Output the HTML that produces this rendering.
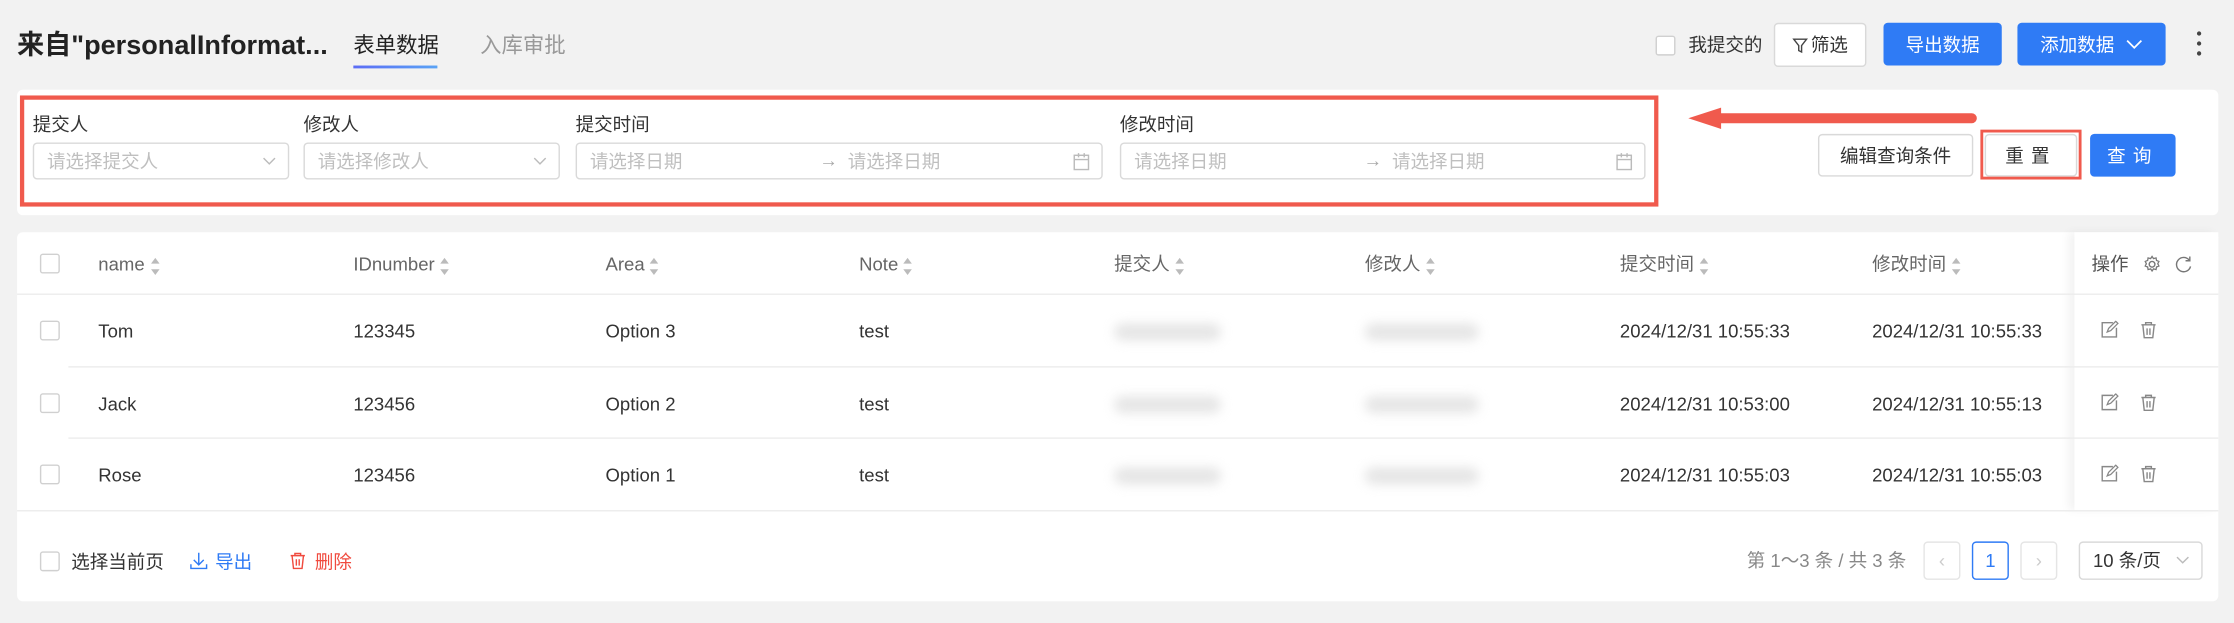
<!DOCTYPE html>
<html><head><meta charset="utf-8">
<style>
html,body{margin:0;padding:0;width:2234px;height:622px;overflow:hidden;background:#f2f2f2}
#s{position:absolute;left:0;top:0;width:1568px;height:437px;transform:scale(1.42474);transform-origin:0 0;font-family:"Liberation Sans","Noto Sans CJK SC",sans-serif;color:#333;font-size:13px;line-height:15px}
.a{position:absolute;white-space:nowrap}
.btn{position:absolute;box-sizing:border-box;border-radius:3px;display:flex;align-items:center;justify-content:center;font-size:13px}
.wb{background:#fff;border:1px solid #d9d9d9;color:#333}
.bb{background:#2f7bf5;color:#fff}
.inp{position:absolute;box-sizing:border-box;border:1px solid #d9d9d9;border-radius:3px;height:26px;top:100px;background:#fff;color:#bfbfbf;font-size:13px}
.lab{position:absolute;top:80px;font-size:13px;color:#333}
.cb{position:absolute;width:14px;height:14px;box-sizing:border-box;border:1px solid #d0d0d0;border-radius:2px;background:#fff}
.th{position:absolute;top:178px;color:#666;font-size:13px}
.sort{display:inline-block;vertical-align:middle;margin-left:4px;width:7px;height:12px;position:relative}
.sort:before{content:"";position:absolute;top:0;left:0;border:3.5px solid transparent;border-bottom:4px solid #bbb;border-top:0}
.sort:after{content:"";position:absolute;bottom:0;left:0;border:3.5px solid transparent;border-top:4px solid #bbb;border-bottom:0}
.td{position:absolute;font-size:13px;color:#333}
.line{position:absolute;height:1px;background:#ececec}
.blur{position:absolute;height:12px;border-radius:6px;background:#ccc;filter:blur(4px)}
</style></head><body><div id="s">
<div class="a" style="left:12px;top:22px;font-size:19px;line-height:22px;font-weight:bold;color:#222">来自"personalInformat...</div>
<div class="a" style="left:248px;top:24px;font-size:15px;line-height:17px;color:#222">表单数据</div>
<div class="a" style="left:248px;top:46px;width:59px;height:2px;background:linear-gradient(90deg,#5b6cf5,#5aa3f5)"></div>
<div class="a" style="left:337px;top:24px;font-size:15px;line-height:17px;color:#999">入库审批</div>

<div class="cb" style="left:1162px;top:25px"></div>
<div class="a" style="left:1185px;top:24px;font-size:13px">我提交的</div>
<div class="btn wb" style="left:1245px;top:16px;width:65px;height:31px"><svg width="11" height="12" viewBox="0 0 11 12" style="margin-right:2px"><path d="M1 1.5h9L6.5 6v4.5l-2-1V6z" fill="none" stroke="#444" stroke-width="1"/></svg>筛选</div>
<div class="btn bb" style="left:1322px;top:16px;width:83px;height:30px">导出数据</div>
<div class="btn bb" style="left:1416px;top:16px;width:104px;height:30px">添加数据<svg width="12" height="8" viewBox="0 0 12 8" style="margin-left:8px"><path d="M1 1.5l5 5 5-5" fill="none" stroke="#fff" stroke-width="1.2"/></svg></div>
<div class="a" style="left:1542px;top:22px;width:3px;height:3px;border-radius:2px;background:#444"></div>
<div class="a" style="left:1542px;top:29px;width:3px;height:3px;border-radius:2px;background:#444"></div>
<div class="a" style="left:1542px;top:36px;width:3px;height:3px;border-radius:2px;background:#444"></div>

<div class="a" style="left:12px;top:63px;width:1545px;height:88px;background:#fff;border-radius:4px"></div>
<div class="a" style="left:14px;top:67px;width:1150px;height:78px;box-sizing:border-box;border:3px solid #f05a4d"></div>
<div class="lab" style="left:23px">提交人</div>
<div class="lab" style="left:213px">修改人</div>
<div class="lab" style="left:404px">提交时间</div>
<div class="lab" style="left:786px">修改时间</div>
<div class="inp" style="left:23px;width:180px"><span class="a" style="left:9px;top:5px">请选择提交人</span><svg class="a" style="left:160px;top:9px" width="10" height="7" viewBox="0 0 10 7"><path d="M1 1l4 4 4-4" fill="none" stroke="#bbb"/></svg></div>
<div class="inp" style="left:213px;width:180px"><span class="a" style="left:9px;top:5px">请选择修改人</span><svg class="a" style="left:160px;top:9px" width="10" height="7" viewBox="0 0 10 7"><path d="M1 1l4 4 4-4" fill="none" stroke="#bbb"/></svg></div>
<div class="inp" style="left:404px;width:370px"><span class="a" style="left:9px;top:5px">请选择日期</span><span class="a" style="left:170px;top:4px;color:#aaa">→</span><span class="a" style="left:190px;top:5px">请选择日期</span><svg class="a" style="left:348px;top:6px" width="12" height="13" viewBox="0 0 12 13"><rect x="1" y="2" width="10" height="10" fill="none" stroke="#bbb"/><path d="M1 5h10M4 0.5v3M8 0.5v3" stroke="#bbb"/></svg></div>
<div class="inp" style="left:786px;width:369px"><span class="a" style="left:9px;top:5px">请选择日期</span><span class="a" style="left:170px;top:4px;color:#aaa">→</span><span class="a" style="left:190px;top:5px">请选择日期</span><svg class="a" style="left:347px;top:6px" width="12" height="13" viewBox="0 0 12 13"><rect x="1" y="2" width="10" height="10" fill="none" stroke="#bbb"/><path d="M1 5h10M4 0.5v3M8 0.5v3" stroke="#bbb"/></svg></div>

<svg class="a" style="left:1184px;top:74px" width="206" height="20" viewBox="0 0 206 20"><path d="M200 9H20" stroke="#f05a4d" stroke-width="7" stroke-linecap="round"/><path d="M1 9L24 1.5V16.5Z" fill="#f05a4d"/></svg>

<div class="btn wb" style="left:1276px;top:94px;width:109px;height:30px">编辑查询条件</div>
<div class="btn wb" style="left:1393px;top:94px;width:65px;height:30px;letter-spacing:5px">重置</div>
<div class="a" style="left:1390px;top:91px;width:71px;height:35px;box-sizing:border-box;border:2px solid #f05a4d"></div>
<div class="btn bb" style="left:1467px;top:94px;width:60px;height:30px;letter-spacing:5px">查询</div>

<div class="a" style="left:12px;top:163px;width:1545px;height:259px;background:#fff;border-radius:4px"></div>
<div class="a" style="left:1456px;top:163px;width:101px;height:195px;box-shadow:-4px 0 6px rgba(0,0,0,0.05);background:#fff"></div>
<div class="line" style="left:12px;top:206px;width:1545px"></div>
<div class="line" style="left:48px;top:257px;width:1509px"></div>
<div class="line" style="left:48px;top:307px;width:1509px"></div>
<div class="line" style="left:12px;top:358px;width:1545px"></div>

<div class="cb" style="left:28px;top:178px"></div>
<div class="th" style="left:69px">name<span class="sort"></span></div>
<div class="th" style="left:248px">IDnumber<span class="sort"></span></div>
<div class="th" style="left:425px">Area<span class="sort"></span></div>
<div class="th" style="left:603px">Note<span class="sort"></span></div>
<div class="th" style="left:782px">提交人<span class="sort"></span></div>
<div class="th" style="left:958px">修改人<span class="sort"></span></div>
<div class="th" style="left:1137px">提交时间<span class="sort"></span></div>
<div class="th" style="left:1314px">修改时间<span class="sort"></span></div>
<div class="th" style="left:1468px;color:#555">操作</div>
<svg class="a" style="left:1504px;top:179px" width="13" height="13" viewBox="0 0 13 13"><circle cx="6.5" cy="6.5" r="2" fill="none" stroke="#777"/><path d="M6.5 1l1 1.5 1.8-.5.3 1.8 1.7.7-.8 1.6.8 1.6-1.7.7-.3 1.8-1.8-.5-1 1.5-1-1.5-1.8.5-.3-1.8-1.7-.7.8-1.6-.8-1.6 1.7-.7.3-1.8 1.8.5z" fill="none" stroke="#777" stroke-width=".9"/></svg>
<svg class="a" style="left:1526px;top:179px" width="13" height="13" viewBox="0 0 13 13"><path d="M10.5 3.5A5 5 0 1 0 11.5 8" fill="none" stroke="#777"/><path d="M11 1v3H8" fill="none" stroke="#777"/></svg>

<div class="cb" style="left:28px;top:225px"></div>
<div class="td" style="left:69px;top:225px">Tom</div><div class="td" style="left:248px;top:225px">123345</div><div class="td" style="left:425px;top:225px">Option 3</div><div class="td" style="left:603px;top:225px">test</div>
<div class="td" style="left:1137px;top:225px">2024/12/31 10:55:33</div><div class="td" style="left:1314px;top:225px">2024/12/31 10:55:33</div>
<div class="cb" style="left:28px;top:276px"></div>
<div class="td" style="left:69px;top:276px">Jack</div><div class="td" style="left:248px;top:276px">123456</div><div class="td" style="left:425px;top:276px">Option 2</div><div class="td" style="left:603px;top:276px">test</div>
<div class="td" style="left:1137px;top:276px">2024/12/31 10:53:00</div><div class="td" style="left:1314px;top:276px">2024/12/31 10:55:13</div>
<div class="cb" style="left:28px;top:326px"></div>
<div class="td" style="left:69px;top:326px">Rose</div><div class="td" style="left:248px;top:326px">123456</div><div class="td" style="left:425px;top:326px">Option 1</div><div class="td" style="left:603px;top:326px">test</div>
<div class="td" style="left:1137px;top:326px">2024/12/31 10:55:03</div><div class="td" style="left:1314px;top:326px">2024/12/31 10:55:03</div>

<div class="blur" style="left:782px;top:227px;width:75px;opacity:.5"></div>
<div class="blur" style="left:958px;top:227px;width:80px;opacity:.5"></div>
<div class="blur" style="left:782px;top:278px;width:75px;opacity:.5"></div>
<div class="blur" style="left:958px;top:278px;width:80px;opacity:.5"></div>
<div class="blur" style="left:782px;top:328px;width:75px;opacity:.5"></div>
<div class="blur" style="left:958px;top:328px;width:80px;opacity:.5"></div>

<svg class="a" style="left:1474px;top:225px" width="50" height="13" viewBox="0 0 50 13"><path d="M9 1.5H1.5v10h10V5" fill="none" stroke="#888"/><path d="M5 8l1-2.5 5-5 1.5 1.5-5 5z" fill="none" stroke="#888" stroke-width=".9"/><path d="M29 3h10M32 3V1.5h4V3M30 3l1 9h6l1-9M33 5.5v4.5M35 5.5v4.5" fill="none" stroke="#888"/></svg>
<svg class="a" style="left:1474px;top:276px" width="50" height="13" viewBox="0 0 50 13"><path d="M9 1.5H1.5v10h10V5" fill="none" stroke="#888"/><path d="M5 8l1-2.5 5-5 1.5 1.5-5 5z" fill="none" stroke="#888" stroke-width=".9"/><path d="M29 3h10M32 3V1.5h4V3M30 3l1 9h6l1-9M33 5.5v4.5M35 5.5v4.5" fill="none" stroke="#888"/></svg>
<svg class="a" style="left:1474px;top:326px" width="50" height="13" viewBox="0 0 50 13"><path d="M9 1.5H1.5v10h10V5" fill="none" stroke="#888"/><path d="M5 8l1-2.5 5-5 1.5 1.5-5 5z" fill="none" stroke="#888" stroke-width=".9"/><path d="M29 3h10M32 3V1.5h4V3M30 3l1 9h6l1-9M33 5.5v4.5M35 5.5v4.5" fill="none" stroke="#888"/></svg>

<div class="cb" style="left:28px;top:387px"></div>
<div class="td" style="left:50px;top:387px">选择当前页</div>
<svg class="a" style="left:133px;top:387px" width="13" height="13" viewBox="0 0 13 13"><path d="M6.5 1v8M3 6l3.5 3.5L10 6M1 9v3h11V9" fill="none" stroke="#2f7bf5"/></svg>
<div class="td" style="left:151px;top:387px;color:#2f7bf5">导出</div>
<svg class="a" style="left:203px;top:387px" width="12" height="13" viewBox="0 0 12 13"><path d="M1 3h10M4 3V1.5h4V3M2 3l1 9h6l1-9M5 5.5v4.5M7 5.5v4.5" fill="none" stroke="#f04a3e"/></svg>
<div class="td" style="left:221px;top:387px;color:#f04a3e">删除</div>

<div class="td" style="left:1226px;top:386px;color:#888">第 1～3 条 / 共 3 条</div>
<div class="btn wb" style="left:1350px;top:380px;width:26px;height:27px;border-color:#e5e5e5;color:#ccc">‹</div>
<div class="btn" style="left:1384px;top:380px;width:26px;height:27px;border:1px solid #2f7bf5;background:#fff;color:#2f7bf5">1</div>
<div class="btn wb" style="left:1418px;top:380px;width:26px;height:27px;border-color:#e5e5e5;color:#ccc">›</div>
<div class="btn wb" style="left:1459px;top:380px;width:87px;height:27px;justify-content:flex-start;padding-left:9px">10 条/页<svg width="10" height="7" viewBox="0 0 10 7" style="margin-left:10px"><path d="M1 1l4 4 4-4" fill="none" stroke="#bbb"/></svg></div>
</div></body></html>
